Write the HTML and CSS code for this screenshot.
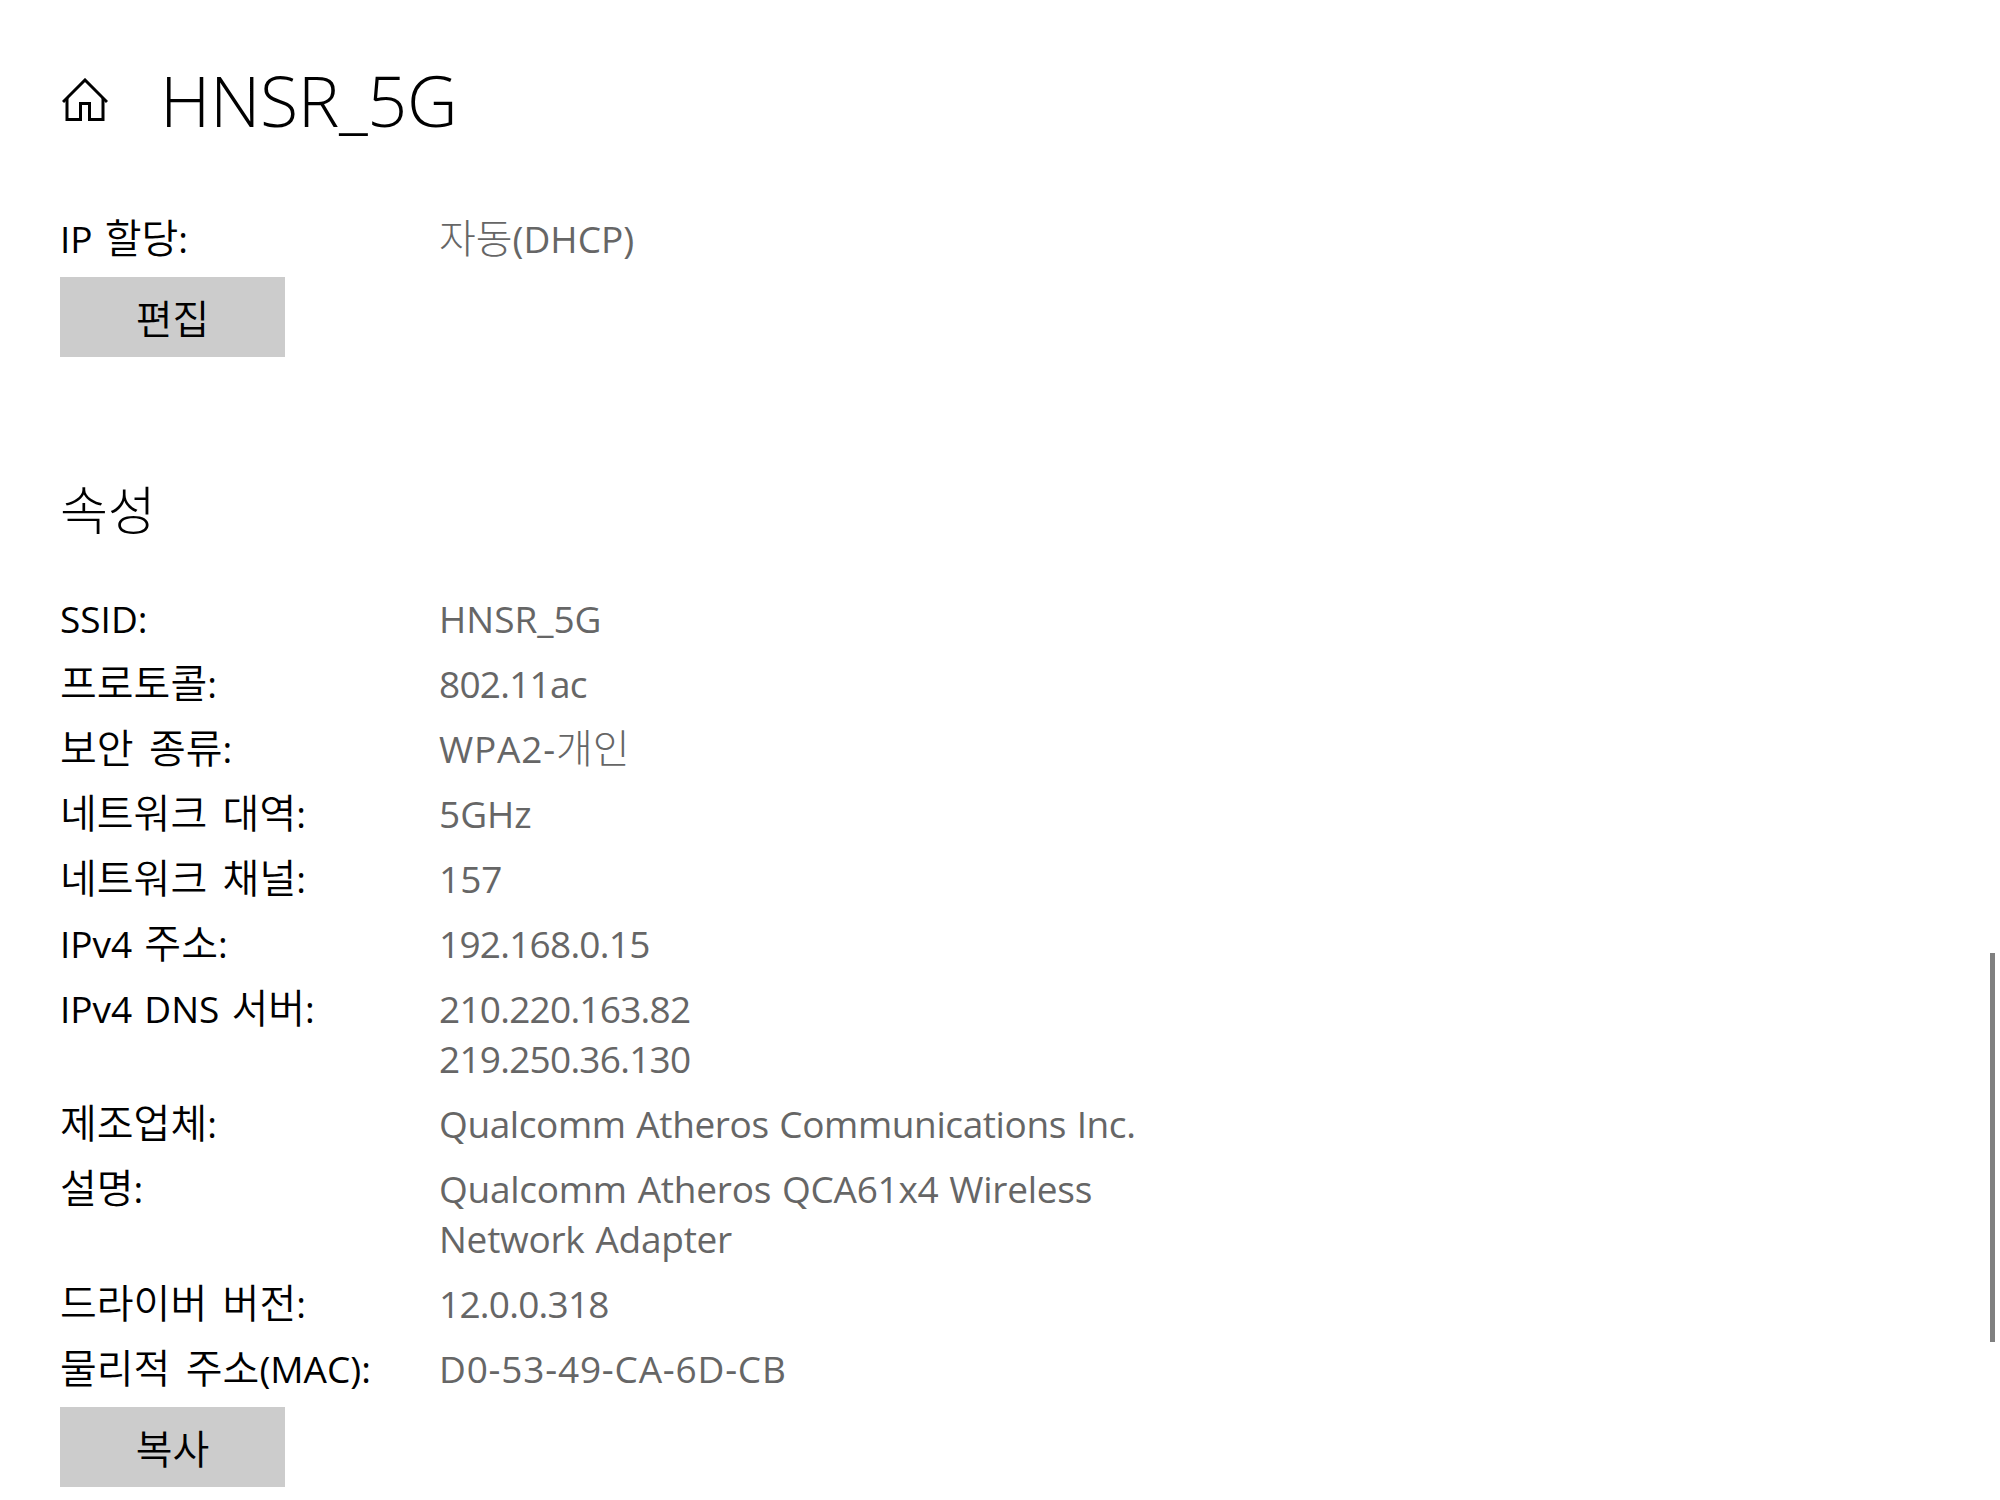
FILE: index.html
```html
<!DOCTYPE html>
<html lang="ko">
<head>
  <meta charset="UTF-8">
  <title>HNSR_5G</title>
  <link rel="stylesheet" href="styles.css">
</head>
<body>
  <div id="page">
    <div class="header">
      <svg class="home" viewBox="0 0 46 44" fill="none" stroke="#000" stroke-width="3">
        <path d="M1 24 L23 2 L45 24"/>
        <path d="M5 20 V41.5 H18.5 V25.5 H27.5 V41.5 H41 V20"/>
      </svg>
      <h1>HNSR_5G</h1>
    </div>

    <div class="props">
      <div class="key">IP <span class="ko">할당</span>:</div>
      <div class="val"><span class="ko">자동</span>(DHCP)</div>
    </div>
    <button class="btn">편집</button>

    <h2>속성</h2>

    <div class="props list">
      <div class="key">SSID:</div>
      <div class="val">HNSR_5G</div>
      <div class="key"><span class="ko">프로토콜</span>:</div>
      <div class="val num">802.11ac</div>
      <div class="key"><span class="ko">보안 종류</span>:</div>
      <div class="val mac">WPA2-<span class="ko">개인</span></div>
      <div class="key"><span class="ko">네트워크 대역</span>:</div>
      <div class="val">5GHz</div>
      <div class="key"><span class="ko">네트워크 채널</span>:</div>
      <div class="val">157</div>
      <div class="key">IPv4 <span class="ko">주소</span>:</div>
      <div class="val num">192.168.0.15</div>
      <div class="key">IPv4 DNS <span class="ko">서버</span>:</div>
      <div class="val num">210.220.163.82<br>219.250.36.130</div>
      <div class="key"><span class="ko">제조업체</span>:</div>
      <div class="val name tight">Qualcomm Atheros Communications Inc.</div>
      <div class="key"><span class="ko">설명</span>:</div>
      <div class="val name">Qualcomm Atheros QCA61x4 Wireless<br>Network Adapter</div>
      <div class="key"><span class="ko">드라이버 버전</span>:</div>
      <div class="val num">12.0.0.318</div>
      <div class="key"><span class="ko">물리적 주소</span>(MAC):</div>
      <div class="val mac">D0-53-49-CA-6D-CB</div>
    </div>
    <button class="btn">복사</button>
  </div>
  <div id="thumb"></div>
</body>
</html>
```

FILE: styles.css
```css
html, body {
  margin: 0;
  background: #fff;
}
body {
  font-family: "Open Sans", "Noto Sans CJK KR", sans-serif;
  font-weight: 400;
  color: #000;
}
#page {
  height: 1500px;
  padding: 0 60px;
  box-sizing: border-box;
  overflow: hidden;
}
.header {
  display: flex;
  align-items: center;
  height: 100px;
  padding-top: 50px;
}
.home {
  width: 46px;
  height: 44px;
  flex: none;
  margin-left: 2px;
  margin-right: 52px;
}
h1 {
  margin: 0;
  font-size: 70px;
  font-weight: 300;
  line-height: 100px;
  letter-spacing: -0.4px;
}
h2 {
  margin: 118px 0 0;
  font-size: 52px;
  font-weight: 300;
  line-height: 70px;
}
.props {
  display: grid;
  grid-template-columns: 379px 1fr;
  row-gap: 15px;
  font-size: 37px;
  line-height: 50px;
  margin-top: 64px;
}
.list {
  margin-top: 49px;
}
.key {
  word-spacing: 2.5px;
}
.ko {
  font-size: 40px;
  font-weight: 350;
  line-height: 40px;
  word-spacing: 5px;
}
.val {
  color: #666;
}
.val .ko {
  font-weight: 300;
  letter-spacing: 0;
}
.num {
  letter-spacing: -0.75px;
}
.name {
  letter-spacing: -0.25px;
  word-spacing: 1.5px;
}
.tight {
  letter-spacing: -0.4px;
}
.mac {
  letter-spacing: 0.8px;
}
.btn {
  display: block;
  width: 225px;
  height: 80px;
  margin-top: 13px;
  padding: 0;
  border: 0;
  background: #ccc;
  color: #000;
  font-family: inherit;
  font-size: 40px;
  font-weight: 350;
}
#thumb {
  position: absolute;
  right: 5px;
  top: 953px;
  width: 5px;
  height: 389px;
  background: #808080;
}
```
